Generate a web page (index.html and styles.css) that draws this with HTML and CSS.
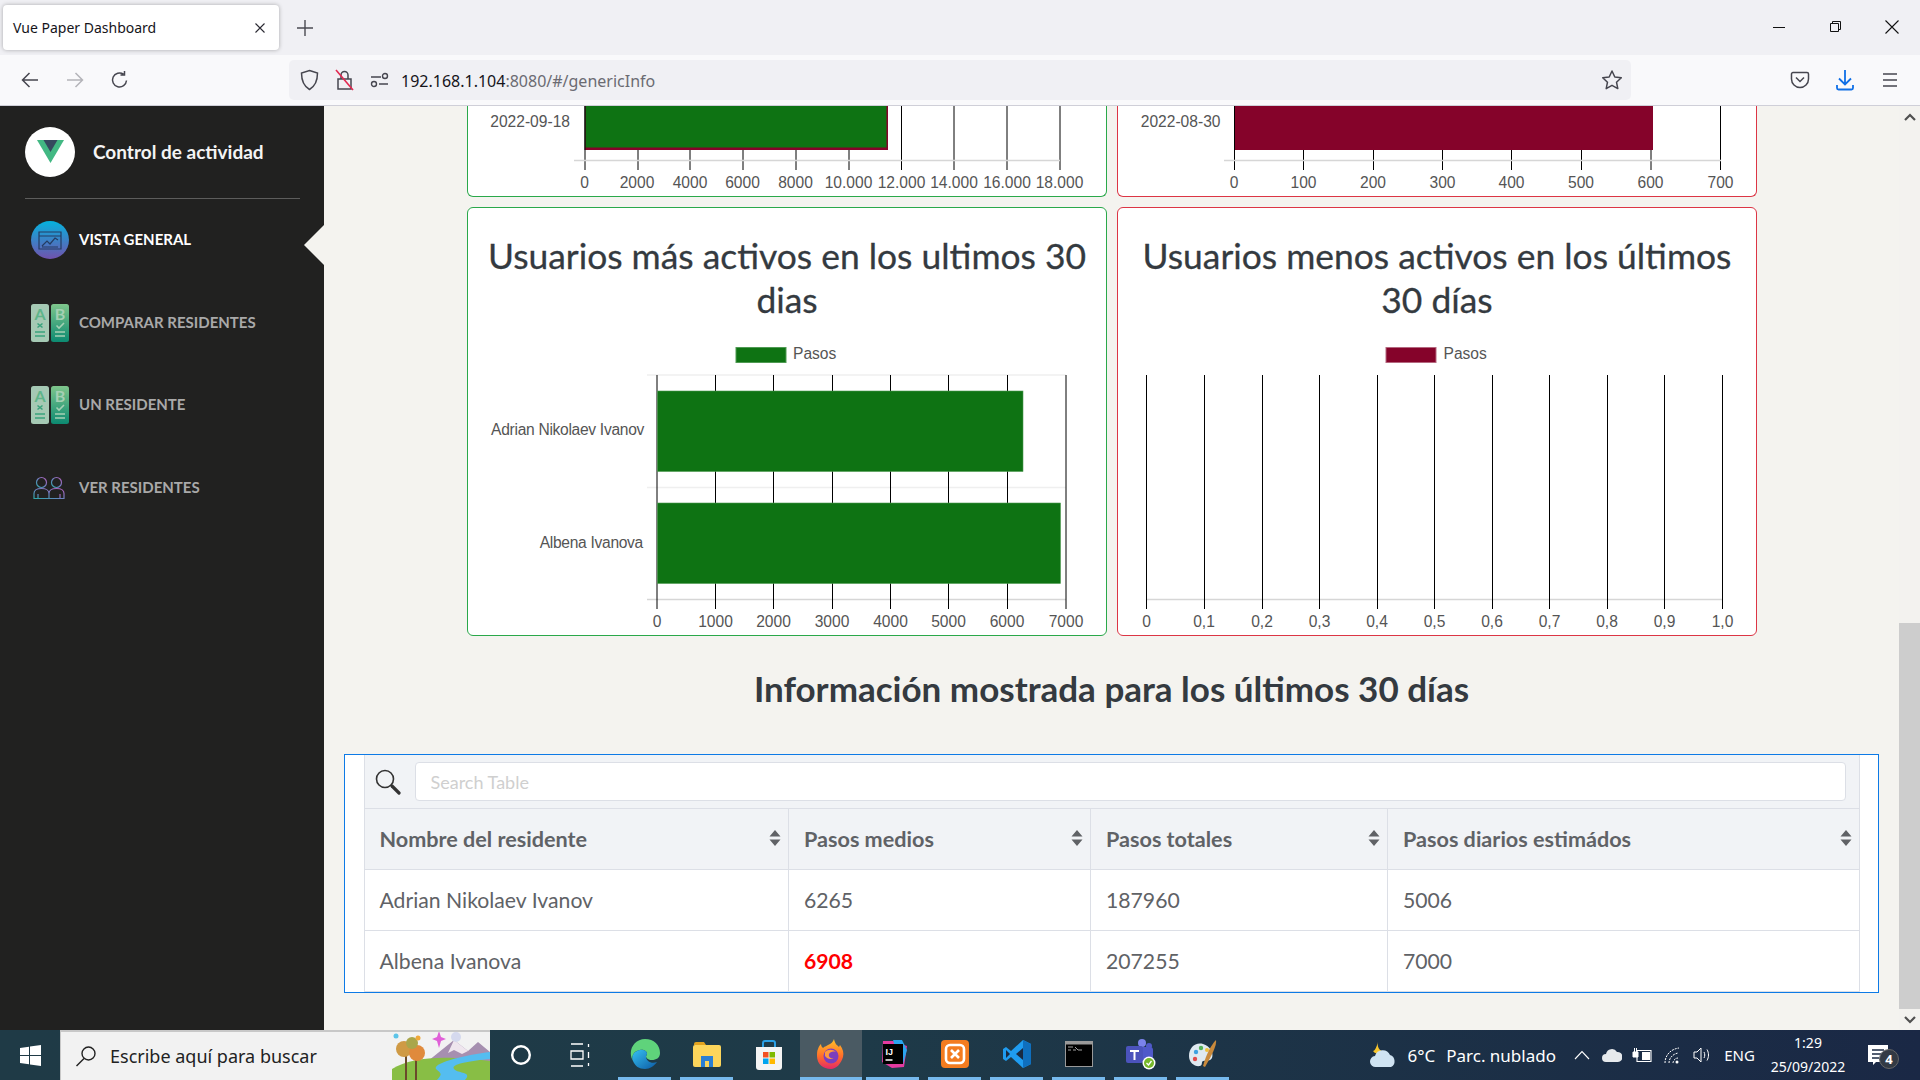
FILE: index.html
```html
<!DOCTYPE html>
<html lang="es">
<head>
<meta charset="UTF-8">
<title>Vue Paper Dashboard</title>
<link rel="stylesheet" href="styles.css">
</head>
<body>

<!-- browser chrome -->
<div class="tabstrip">
	<div class="tab">
		<span class="tab-title">Vue Paper Dashboard</span>
		<svg class="tab-close" width="12" height="12" viewBox="0 0 12 12"><path d="M1.5 1.5l9 9M10.5 1.5l-9 9" stroke="#2b2a33" stroke-width="1.1"/></svg>
	</div>
	<svg class="new-tab" width="16" height="16" viewBox="0 0 16 16"><path d="M8 0v16M0 8h16" stroke="#4a4a52" stroke-width="1.4"/></svg>
	<div class="winctrls">
		<svg width="46" height="16" viewBox="0 0 46 16"><path d="M17 8.5h12" stroke="#111" stroke-width="1"/></svg>
		<svg width="46" height="16" viewBox="0 0 46 16"><path d="M18.5 4.5h8v8h-8zM20.5 4.5v-2h8v8h-2" fill="none" stroke="#111" stroke-width="1"/></svg>
		<svg width="46" height="16" viewBox="0 0 46 16"><path d="M16.500 1.500l13 13M29.500 1.500l-13 13" stroke="#111" stroke-width="1.1"/></svg>
	</div>
</div>

<div class="toolbar">
	<span class="tool-btn"><svg width="20" height="20" viewBox="0 0 20 20"><path d="M18 10H3M9.500 3L2.500 10l7 7" fill="none" stroke="#46464f" stroke-width="1.5"/></svg></span>
	<span class="tool-btn"><svg width="20" height="20" viewBox="0 0 20 20"><path d="M2 10h15M10.500 3l7 7-7 7" fill="none" stroke="#b4b4b9" stroke-width="1.5"/></svg></span>
	<span class="tool-btn"><svg width="20" height="20" viewBox="0 0 20 20"><path d="M16.500 10.500a7 7 0 1 1-3-6.300M14.500 1v4h-4" fill="none" stroke="#46464f" stroke-width="1.5"/></svg></span>
	<div class="urlbar">
		<span class="url-icon"><svg width="19" height="22" viewBox="0 0 19 22"><path d="M9.500 1.500l8 2.500c0 8-2 13-8 16.500C3.500 17 1.500 12 1.500 4z" fill="none" stroke="#46464f" stroke-width="1.5"/></svg></span>
		<span class="url-icon"><svg width="19" height="22" viewBox="0 0 19 22"><path d="M3 10h13v10H3zM6 10V6a3.500 3.500 0 0 1 7 0v4" fill="none" stroke="#46464f" stroke-width="1.5"/><path d="M1 1l17 20" stroke="#e22850" stroke-width="1.6"/></svg></span>
		<span class="url-icon"><svg width="19" height="16" viewBox="0 0 19 16"><path d="M1 5h10M9 12h9" stroke="#46464f" stroke-width="1.5"/><circle cx="15" cy="4" r="2.500" fill="none" stroke="#46464f" stroke-width="1.400"/><circle cx="4" cy="12" r="2.500" fill="none" stroke="#46464f" stroke-width="1.400"/></svg></span>
		<span class="url-text">192.168.1.104<span class="url-dim">:8080/#/genericInfo</span></span>
		<svg class="url-star" width="22" height="22" viewBox="0 0 22 22"><path d="M11 2l2.800 6 6.500.8-4.800 4.400 1.300 6.400-5.800-3.300-5.800 3.300 1.300-6.400L1.700 8.800 8.200 8z" fill="none" stroke="#46464f" stroke-width="1.500" stroke-linejoin="round"/></svg>
	</div>
	<div class="tool-right">
		<span class="tool-btn"><svg width="20" height="20" viewBox="0 0 20 20"><path d="M3 2.500h14a1.500 1.500 0 0 1 1.500 1.500v5a8.500 8.500 0 0 1-17 0V4A1.500 1.500 0 0 1 3 2.500z" fill="none" stroke="#46464f" stroke-width="1.500"/><path d="M6 7.500l4 4 4-4" fill="none" stroke="#46464f" stroke-width="1.500"/></svg></span>
		<span class="tool-btn"><svg width="20" height="22" viewBox="0 0 20 22"><path d="M10 1v14M4 9.500l6 6 6-6" fill="none" stroke="#0f6fe6" stroke-width="1.800"/><path d="M2 16v3a1.500 1.500 0 0 0 1.500 1.500h13A1.500 1.500 0 0 0 18 19v-3" fill="none" stroke="#0f6fe6" stroke-width="1.800"/></svg></span>
		<span class="tool-btn"><svg width="18" height="16" viewBox="0 0 18 16"><path d="M2 2h14M2 8h14M2 14h14" stroke="#46464f" stroke-width="1.600"/></svg></span>
	</div>
</div>

<div class="app">
	<aside class="sidebar">
		<div class="brand">
			<span class="brand-logo"><svg width="27" height="23" viewBox="0 0 27 23"><path d="M0 0h27L13.500 23z" fill="#42b883"/><path d="M6.500 0h14l-7 12z" fill="#35495e"/></svg></span>
			<span class="brand-name">Control de actividad</span>
		</div>
		<nav class="nav">
			<a class="nav-item active">
				<svg class="nav-icon" width="38" height="38" viewBox="0 0 38 38">
					<defs><linearGradient id="g1" x1="0" y1="0" x2="0" y2="1"><stop offset="0" stop-color="#05b2de"/><stop offset="1" stop-color="#7152ae"/></linearGradient></defs>
					<circle cx="19" cy="19" r="19" fill="url(#g1)"/>
					<path d="M8 11h22v17H8zM8 15h22" fill="none" stroke="#253c62" stroke-width="1.200"/>
					<path d="M11 25l5-5 3 3 5-6 3 2M11 26h16" fill="none" stroke="#253c62" stroke-width="1.200"/>
				</svg>
				<span>VISTA GENERAL</span>
			</a>
			<a class="nav-item">
				<svg class="nav-icon" width="38" height="38" viewBox="0 0 38 38">
					<defs><linearGradient id="g2" x1="0" y1="0" x2="0" y2="1"><stop offset="0" stop-color="#7fc68c"/><stop offset="1" stop-color="#0c8a71"/></linearGradient></defs>
					<rect width="18" height="38" rx="2.500" fill="#a5c9b4"/>
					<rect x="20" width="18" height="38" rx="2.500" fill="url(#g2)"/>
					<text class="ab-letter" x="9" y="16" fill="#5fb58a">A</text>
					<text class="ab-letter" x="29" y="16" fill="#a5d0b4">B</text>
					<path d="M6.500 19.500l5 4M11.500 19.500l-5 4" stroke="#3aa27c" stroke-width="1.600"/>
					<path d="M25.500 21.500l2.500 2.500 5-5" fill="none" stroke="#a5d0b4" stroke-width="1.600"/>
					<path d="M4 28h10M4 32h10" stroke="#3aa27c" stroke-width="1.600"/>
					<path d="M24 28h10M24 32h10" stroke="#a5d0b4" stroke-width="1.600"/>
				</svg>
				<span>COMPARAR RESIDENTES</span>
			</a>
			<a class="nav-item">
				<svg class="nav-icon" width="38" height="38" viewBox="0 0 38 38">
					<rect width="18" height="38" rx="2.500" fill="#a5c9b4"/>
					<rect x="20" width="18" height="38" rx="2.500" fill="url(#g2)"/>
					<text class="ab-letter" x="9" y="16" fill="#5fb58a">A</text>
					<text class="ab-letter" x="29" y="16" fill="#a5d0b4">B</text>
					<path d="M6.500 19.500l5 4M11.500 19.500l-5 4" stroke="#3aa27c" stroke-width="1.600"/>
					<path d="M25.500 21.500l2.500 2.500 5-5" fill="none" stroke="#a5d0b4" stroke-width="1.600"/>
					<path d="M4 28h10M4 32h10" stroke="#3aa27c" stroke-width="1.600"/>
					<path d="M24 28h10M24 32h10" stroke="#a5d0b4" stroke-width="1.600"/>
				</svg>
				<span>UN RESIDENTE</span>
			</a>
			<a class="nav-item">
				<svg class="nav-icon" width="38" height="24" viewBox="0 0 38 24">
					<defs><linearGradient id="g3" x1="0" y1="1" x2="1" y2="0"><stop offset="0" stop-color="#2fa7a8"/><stop offset=".5" stop-color="#6f7fc0"/><stop offset="1" stop-color="#b35bb5"/></linearGradient></defs>
					<g fill="none" stroke="url(#g3)" stroke-width="1.200">
						<circle cx="11.500" cy="6.500" r="5"/><circle cx="26.500" cy="6.500" r="5"/>
						<path d="M4 22.500v-5c0-3 3-5 7.500-5s7.500 2 7.500 5c0-3 3-5 7.500-5s7.500 2 7.500 5v5zM19 17.500v5"/>
						<path d="M8 18v4.500M30 18v4.500"/>
					</g>
				</svg>
				<span>VER RESIDENTES</span>
			</a>
		</nav>
	</aside>

	<main class="content">
		<div class="charts">
			<section class="card card-green card-cut">
				<svg class="chart" width="638" height="90" viewBox="468 106 638 90">
					<g class="grid-v">
						<path d="M585 106v64M638 150v20M690 150v20M743 150v20M796 150v20M849 150v20M901.500 106v64M954 106v64M1007 106v64M1060 106v64"/>
					</g>
					<path class="grid-h" d="M574 160.500h486"/>
					<rect x="585" y="106" width="303" height="44" fill="#85032a"/>
					<rect x="585.500" y="106" width="301" height="41.500" fill="#0e7313"/>
					<path class="grid-v" d="M585 106v44"/>
					<text class="tick tick-end" x="570" y="127">2022-09-18</text>
					<g class="tick">
						<text x="584.500" y="188">0</text><text x="637" y="188">2000</text><text x="690" y="188">4000</text><text x="742.500" y="188">6000</text><text x="795.500" y="188">8000</text><text x="848.500" y="188">10.000</text><text x="901.500" y="188">12.000</text><text x="954" y="188">14.000</text><text x="1007" y="188">16.000</text><text x="1059.500" y="188">18.000</text>
					</g>
				</svg>
			</section>
			<section class="card card-red card-cut">
				<svg class="chart" width="638" height="90" viewBox="1118 106 638 90">
					<path class="grid-v" d="M1234.500 106v64M1303.500 150v20M1373.500 150v20M1442.500 150v20M1511.500 150v20M1581.500 150v20M1651 150v20M1720.500 106v64"/>
					<path class="grid-h" d="M1224 160.500h497"/>
					<rect x="1235" y="106" width="418" height="44" fill="#85032a"/>
					<text class="tick tick-end" x="1220.500" y="127">2022-08-30</text>
					<g class="tick">
						<text x="1234" y="188">0</text><text x="1303.500" y="188">100</text><text x="1373" y="188">200</text><text x="1442.500" y="188">300</text><text x="1511.500" y="188">400</text><text x="1581" y="188">500</text><text x="1650.500" y="188">600</text><text x="1720.500" y="188">700</text>
					</g>
				</svg>
			</section>
			<section class="card card-green">
				<h4 class="card-title">Usuarios más activos en los ultimos 30 dias</h4>
				<svg class="chart" width="638" height="312" viewBox="468 323 638 312">
					<rect x="736" y="347.500" width="50" height="15" fill="#0e7313" stroke="#4f9a53"/>
					<text class="tick tick-start" x="793" y="359">Pasos</text>
					<path class="grid-h light" d="M647 375h419M647 487.500h419"/>
					<path class="grid-h" d="M647 599.500h419"/>
					<path class="grid-v" d="M657 375v234M715.500 375v234M773.500 375v234M832.500 375v234M890.500 375v234M948.500 375v234M1007.500 375v234M1066 375v234"/>
					<rect x="657.500" y="391" width="365.500" height="80.500" fill="#0e7313" stroke="#4f9a53" stroke-width=".6"/>
					<rect x="657.500" y="503" width="403" height="80.500" fill="#0e7313" stroke="#4f9a53" stroke-width=".6"/>
					<text class="tick tick-end tick-name" x="644" y="435">Adrian Nikolaev Ivanov</text>
					<text class="tick tick-end tick-name" x="643" y="548">Albena Ivanova</text>
					<g class="tick">
						<text x="657" y="627">0</text><text x="715.500" y="627">1000</text><text x="773.500" y="627">2000</text><text x="832" y="627">3000</text><text x="890.500" y="627">4000</text><text x="948.500" y="627">5000</text><text x="1007" y="627">6000</text><text x="1066" y="627">7000</text>
					</g>
				</svg>
			</section>
			<section class="card card-red">
				<h4 class="card-title">Usuarios menos activos en los últimos 30 días</h4>
				<svg class="chart" width="638" height="312" viewBox="1118 323 638 312">
					<rect x="1386" y="347.500" width="50" height="15" fill="#85032a" stroke="#b4687f"/>
					<text class="tick tick-start" x="1443.500" y="359">Pasos</text>
					<path class="grid-h" d="M1146 599.500h577"/>
					<path class="grid-v" d="M1146.500 375v234M1204.500 375v234M1262.500 375v234M1319.500 375v234M1377.500 375v234M1434.500 375v234M1492.500 375v234M1549.500 375v234M1607.500 375v234M1664.500 375v234M1722.500 375v234"/>
					<g class="tick">
						<text x="1146.500" y="627">0</text><text x="1204" y="627">0,1</text><text x="1262" y="627">0,2</text><text x="1319.500" y="627">0,3</text><text x="1377" y="627">0,4</text><text x="1434.500" y="627">0,5</text><text x="1492" y="627">0,6</text><text x="1549.500" y="627">0,7</text><text x="1607" y="627">0,8</text><text x="1664.500" y="627">0,9</text><text x="1722.500" y="627">1,0</text>
					</g>
				</svg>
			</section>
		</div>

		<h3 class="section-title">Información mostrada para los últimos 30 días</h3>

		<div class="table-wrap">
			<div class="search-row">
				<svg class="search-icon" width="28" height="26" viewBox="0 0 28 26"><circle cx="11" cy="10" r="8.500" fill="none" stroke="#333" stroke-width="1.600"/><path d="M18 17l7 7" stroke="#333" stroke-width="3.200" stroke-linecap="round"/></svg>
				<input class="search-input" type="text" placeholder="Search Table">
			</div>
			<table class="res-table">
				<colgroup><col class="col-a"><col class="col-b"><col class="col-c"><col></colgroup>
				<thead>
					<tr>
						<th><div class="th-in">Nombre del residente<svg width="12" height="16" viewBox="0 0 12 16"><path d="M6 0l5.500 6.500H.5zM6 16L.5 9.500h11z" fill="#606266"/></svg></div></th>
						<th><div class="th-in">Pasos medios<svg width="12" height="16" viewBox="0 0 12 16"><path d="M6 0l5.500 6.500H.5zM6 16L.5 9.500h11z" fill="#606266"/></svg></div></th>
						<th><div class="th-in">Pasos totales<svg width="12" height="16" viewBox="0 0 12 16"><path d="M6 0l5.500 6.500H.5zM6 16L.5 9.500h11z" fill="#606266"/></svg></div></th>
						<th><div class="th-in">Pasos diarios estimádos<svg width="12" height="16" viewBox="0 0 12 16"><path d="M6 0l5.500 6.500H.5zM6 16L.5 9.500h11z" fill="#606266"/></svg></div></th>
					</tr>
				</thead>
				<tbody>
					<tr><td>Adrian Nikolaev Ivanov</td><td>6265</td><td>187960</td><td>5006</td></tr>
					<tr><td>Albena Ivanova</td><td class="hot">6908</td><td>207255</td><td>7000</td></tr>
				</tbody>
			</table>
		</div>
	</main>

	<div class="scrollbar">
		<span class="scroll-btn"><svg width="12" height="8" viewBox="0 0 12 8"><path d="M1 7l5-5 5 5" fill="none" stroke="#505050" stroke-width="2.200"/></svg></span>
		<span class="scroll-track"></span>
		<span class="scroll-thumb"></span>
		<span class="scroll-btn"><svg width="12" height="8" viewBox="0 0 12 8"><path d="M1 1l5 5 5-5" fill="none" stroke="#505050" stroke-width="2.200"/></svg></span>
	</div>
</div>

<!-- windows taskbar -->
<footer class="taskbar">
	<span class="start"><svg width="21" height="21" viewBox="0 0 21 21"><path d="M0 3l9-1.300V10H0zM10 1.500L21 0v10H10zM0 11h9v8.300L0 18zM10 11h11v10l-11-1.500z" fill="#fff"/></svg></span>
	<div class="task-search">
		<svg width="22" height="22" viewBox="0 0 22 22"><circle cx="13.500" cy="8.500" r="6.500" fill="none" stroke="#222" stroke-width="1.400"/><path d="M9 13.500L1.500 21" stroke="#222" stroke-width="1.500"/></svg>
		<span class="task-search-text">Escribe aquí para buscar</span>
		<svg class="scenery" width="98" height="50" viewBox="0 0 98 50">
			<path d="M36 30L62 9l14 11 10-9 12 10v29H30z" fill="#a68fb0"/>
			<path d="M62 9l14 11-6 3-8-4-6 3z" fill="#efe6ee"/>
			<path d="M0 50V38c20-12 50-14 98-8v20z" fill="#88be45"/>
			<path d="M98 28c-20 2-40 5-36 10s20 2 10 12H44c8-8 4-8 0-12-4-6 30-14 54-17z" fill="#54bdf0"/>
			<path d="M14 50V24M24 50V28" stroke="#6b4a2b" stroke-width="2"/>
			<circle cx="12" cy="18" r="8" fill="#cf9a45"/><circle cx="25" cy="22" r="8" fill="#e08a3c"/><circle cx="20" cy="12" r="6" fill="#a9a64b"/>
			<circle cx="4" cy="5" r="2.500" fill="#5cc4e8"/><circle cx="26" cy="7" r="2.500" fill="#f0a93a"/>
			<path d="M47 0l2 6 5 2-5 2-2 7-2-7-5-2 5-2z" fill="#e05fd8"/>
			<circle cx="64" cy="6" r="5" fill="#d5d9ee"/>
		</svg>
	</div>
	<div class="task-apps">
		<span class="task-slot"><svg width="22" height="22" viewBox="0 0 22 22"><circle cx="11" cy="11" r="8.800" fill="none" stroke="#fff" stroke-width="2.400"/></svg></span>
		<span class="task-slot"><svg class="taskview" width="20" height="24" viewBox="0 0 20 24"><path d="M1 1h12M1 23h12M1 8h12v8H1zM18.500 1v3M18.500 9v6M18.500 20v3" fill="none" stroke="#fff" stroke-width="1.300"/></svg></span>
		<span class="task-slot open"><svg width="30" height="30" viewBox="0 0 30 30"><defs><linearGradient id="e1" x1="0" y1="0" x2="1" y2="1"><stop offset="0" stop-color="#35c1f1"/><stop offset="1" stop-color="#0c59a4"/></linearGradient></defs><path d="M15 0c9 0 15 6 15 14 0 5-4 7-8 7-4 0-6-2-6-4 3-3-1-7-6-6C4 12 1 17 3 22 -3 12 4 0 15 0z" fill="#5fd37b"/><path d="M3 22C1 17 4 12 10 11c5-1 9 3 6 6 0 6 6 8 11 6-3 4-7 7-12 7C9 30 5 27 3 22z" fill="url(#e1)"/></svg></span>
		<span class="task-slot open"><svg width="28" height="26" viewBox="0 0 28 26"><path d="M1 3a2 2 0 0 1 2-2h8l2 3H1z" fill="#e2a21e"/><rect y="4" width="28" height="22" rx="2" fill="#fcd55b"/><path d="M8 26V15h12v11h-4v-6h-4v6z" fill="#2a7fd4"/></svg></span>
		<span class="task-slot"><svg width="28" height="30" viewBox="0 0 28 30"><path d="M8 7V3a2 2 0 0 1 2-2h8a2 2 0 0 1 2 2v4" fill="none" stroke="#2aa0e6" stroke-width="2"/><path d="M1 7h26v20a3 3 0 0 1-3 3H4a3 3 0 0 1-3-3z" fill="#f4f4f4"/><rect x="8" y="12" width="5.500" height="5.500" fill="#f25022"/><rect x="14.500" y="12" width="5.500" height="5.500" fill="#7fba00"/><rect x="8" y="18.500" width="5.500" height="5.500" fill="#00a4ef"/><rect x="14.500" y="18.500" width="5.500" height="5.500" fill="#ffb900"/></svg></span>
		<span class="task-slot active"><svg width="30" height="30" viewBox="0 0 30 30"><defs><linearGradient id="f1" x1="0" y1="0" x2="0" y2="1"><stop offset="0" stop-color="#ffc22a"/><stop offset=".6" stop-color="#ff6a2a"/><stop offset="1" stop-color="#e3286a"/></linearGradient></defs><path d="M2 10C3 7 4 6 5 5c0 2 1 3 2 4 2-2 4-2 5-3 3-1 5-3 6-6 1 5 3 6 5 8l1-2c3 4 4 8 3 12-2 7-7 12-12 12C7 30 1 25 1 17c0-3 0-5 1-7z" fill="url(#f1)"/><circle cx="15" cy="17" r="7.500" fill="#7b3fbd"/><path d="M9 13c3-3 8-3 11 0-3-1-6 0-7 2-1 3 2 5 5 4-3 2-7 1-9-2z" fill="#ff9a3c"/></svg></span>
		<span class="task-slot open"><svg width="28" height="28" viewBox="0 0 28 28"><path d="M4 1h10L28 6l-3 21-12 1L3 22z" fill="#e43aa0"/><path d="M14 0h9l5 10-4 14-6-10z" fill="#2aa5f0"/><rect x="4" y="4" width="20" height="20" fill="#000"/><text class="ij" x="6.500" y="14.500">IJ</text><path d="M6.500 20h7" stroke="#fff" stroke-width="1.500"/></svg></span>
		<span class="task-slot open"><svg width="28" height="28" viewBox="0 0 28 28"><rect width="28" height="28" rx="4" fill="#f37c20"/><path d="M9 5h10a4 4 0 0 1 4 4v10a4 4 0 0 1-4 4H9a4 4 0 0 1-4-4V9a4 4 0 0 1 4-4z" fill="none" stroke="#fff" stroke-width="2.600"/><path d="M10 10l8 8M18 10l-8 8" stroke="#fff" stroke-width="2.600"/></svg></span>
		<span class="task-slot open"><svg width="30" height="30" viewBox="0 0 30 30"><path d="M21 1l8 4v20l-8 4-12-11-5 4-3-2v-10l3-2 5 4z" fill="#1f9cf0"/><path d="M21 1l8 4v20l-8 4z" fill="#0f6fbe"/><path d="M21 9l-7 6 7 6z" fill="#1a2a42"/><path d="M4 11l4 4-4 4z" fill="#1a2a42"/></svg></span>
		<span class="task-slot open"><svg width="28" height="26" viewBox="0 0 28 26"><rect width="28" height="26" fill="#999"/><rect x="1" y="3.500" width="26" height="21.500" fill="#000"/><path d="M3 6h5M3 9h3M8 9l3 0M10 6l3 3h4" stroke="#ccc" stroke-width=".8" fill="none"/></svg></span>
		<span class="task-slot open"><svg width="32" height="32" viewBox="0 0 32 32"><circle cx="17" cy="5" r="4" fill="#7b83eb"/><circle cx="24" cy="8" r="3" fill="#5059c9"/><rect x="13" y="9" width="15" height="15" rx="3" fill="#5059c9"/><rect x="1" y="8" width="17" height="17" rx="2" fill="#4b53bc"/><path d="M5 12h9v2h-3.500v8h-2v-8H5z" fill="#fff"/><circle cx="24" cy="25" r="6.500" fill="#fff"/><circle cx="24" cy="25" r="5" fill="#76b82a"/><path d="M21.500 25l2 2 3-4" fill="none" stroke="#fff" stroke-width="1.300"/></svg></span>
		<span class="task-slot open"><svg width="30" height="30" viewBox="0 0 30 30"><path d="M15 5C7 3 1 9 1 17c0 7 6 11 11 10 3-1 1-4 3-5 3-1 7 1 9-3 2-5-2-12-9-14z" fill="#dfe9f0"/><circle cx="8" cy="13" r="2.200" fill="#3fa1e0"/><circle cx="13" cy="9" r="2.200" fill="#54b257"/><circle cx="7" cy="20" r="2.200" fill="#e14b4b"/><circle cx="19" cy="11" r="2" fill="#f0c03a"/><path d="M28 1c1 5-4 15-11 27l-2-1C18 16 23 6 28 1z" fill="#c98a3c"/></svg></span>
	</div>
	<div class="tray">
		<svg class="tray-weather" width="28" height="26" viewBox="0 0 28 26"><path d="M9 0c-1 5 1 9 7 10-3 3-9 3-12-1 2 0 4-5 5-9z" fill="#f7c52d"/><path d="M7 25a5.500 5.500 0 0 1-1-11 8 8 0 0 1 15-1 6.500 6.500 0 0 1 1 12z" fill="#cfe3f2"/></svg>
		<span class="tray-temp">6°C</span>
		<span class="tray-temp">Parc. nublado</span>
		<span class="tray-slot"><svg width="16" height="10" viewBox="0 0 16 10"><path d="M1 9l7-7.500L15 9" fill="none" stroke="#fff" stroke-width="1.100"/></svg></span>
		<span class="tray-slot"><svg width="20" height="14" viewBox="0 0 20 14"><path d="M4 14a4 4 0 0 1 0-8 6 6 0 0 1 11-2 5 5 0 0 1 1 10z" fill="#e6e9ec"/></svg></span>
		<span class="tray-slot"><svg width="20" height="16" viewBox="0 0 20 16"><path d="M5 3.500h14v11H5z" fill="none" stroke="#fff" stroke-width="1.100"/><rect x="10" y="5" width="8" height="8" fill="#fff"/><path d="M1 5h5v5H1zM2.500 1v4M4.500 1v4" stroke="#fff" fill="#fff"/></svg></span>
		<span class="tray-slot"><svg width="18" height="18" viewBox="0 0 18 18"><path d="M2 17C2 9 8 3 16 2M6 17c0-5 4-9 9-10M10 17c0-2 2-5 5-5" fill="none" stroke="#fff" stroke-width="1" stroke-dasharray="2 1"/><circle cx="14" cy="16" r="1.500" fill="#fff"/></svg></span>
		<span class="tray-slot"><svg width="20" height="20" viewBox="0 0 20 20"><path d="M2 7h3l4-4v14l-4-4H2z" fill="none" stroke="#fff" stroke-width="1"/><path d="M12 7c1 2 1 4 0 6M15 4.500c2 3.500 2 7.500 0 11" fill="none" stroke="#fff" stroke-width="1"/></svg></span>
		<span class="tray-lang">ENG</span>
		<span class="tray-clock"><span>1:29</span><span>25/09/2022</span></span>
		<span class="tray-notif">
			<svg width="20" height="20" viewBox="0 0 20 20"><path d="M0 0h20v17H8l-3 3v-3H0z" fill="#fff"/><path d="M4 5h12M4 9h12M4 13h7" stroke="#1b2a42" stroke-width="1.300"/></svg>
			<span class="notif-badge">4</span>
		</span>
	</div>
</footer>

</body>
</html>
```

FILE: styles.css
```css
html, body{
	margin:0;
	height:100%;
}

body{
	width:1920px;
	height:1080px;
	display:flex;
	flex-direction:column;
	overflow:hidden;
	background:#f4f3ef;
	font-family:"Lato", "Liberation Sans", sans-serif;
}

svg{
	display:block;
}

/* browser chrome */
.tabstrip{
	height:55px;
	flex:none;
	display:flex;
	align-items:flex-start;
	background:#f0f0f4;
}

.tab{
	width:276px;
	height:45px;
	margin:5px 0 0 3px;
	padding:0 13px 0 10px;
	box-sizing:border-box;
	display:flex;
	align-items:center;
	justify-content:space-between;
	background:#fff;
	border-radius:4px;
	box-shadow:0 0 4px rgba(0,0,0,.3);
}

.tab-title{
	font:14px "Noto Sans", sans-serif;
	color:#15141a;
}

.new-tab{
	margin:20px 0 0 18px;
}

.winctrls{
	margin-left:auto;
	display:flex;
	padding:19px 5px 0 0;
}

.winctrls svg{
	margin-left:10.7px;
}

.toolbar{
	height:51px;
	flex:none;
	box-sizing:border-box;
	display:flex;
	align-items:center;
	padding-left:7.5px;
	background:#f9f9fb;
	border-bottom:1px solid #cfcfd8;
}

.tool-btn{
	width:45px;
	display:flex;
	align-items:center;
	justify-content:center;
}

.urlbar{
	width:1342px;
	height:40px;
	margin-left:146.5px;
	padding:0 8px 0 2.5px;
	box-sizing:border-box;
	display:flex;
	align-items:center;
	background:#f0f0f4;
	border-radius:5px;
}

.url-icon{
	width:35px;
	display:flex;
	justify-content:center;
}

.url-text{
	margin:2px 0 0 4.5px;
	font:16px "Noto Sans", sans-serif;
	color:#15141a;
}

.url-dim{
	color:#6b6b72;
}

.url-star{
	margin-left:auto;
}

.tool-right{
	margin-left:auto;
	padding-right:7.5px;
	display:flex;
}

.app{
	flex:1;
	display:flex;
	min-height:0;
}

/* sidebar */
.sidebar{
	width:324px;
	flex:none;
	background:#212120;
}

.brand{
	height:93px;
	margin:0 24px 0 25px;
	box-sizing:border-box;
	display:flex;
	align-items:center;
	padding-bottom:1px;
	border-bottom:1px solid #5d5d5c;
}

.brand-logo{
	width:50px;
	height:50px;
	border-radius:50%;
	background:#fff;
	display:flex;
	align-items:center;
	justify-content:center;
}

.brand-name{
	margin-left:18px;
	font-size:19px;
	font-weight:700;
	color:#f4f4f4;
}

.nav-item{
	position:relative;
	height:82.5px;
	padding-left:31px;
	display:flex;
	align-items:center;
	font-size:15px;
	font-weight:700;
	color:#a9a9a9;
}

.nav-item span{
	position:absolute;
	left:79px;
	margin-top:-2px;
}

.nav-item:last-child{
	padding-left:30px;
}

.nav-item.active{
	color:#fff;
}

.nav-item.active::after{
	content:"";
	position:absolute;
	right:0;
	top:26px;
	border-style:solid;
	border-width:20px 20px 20px 0;
	border-color:transparent #f4f3ef transparent transparent;
}

.ab-letter{
	font:700 16px "Lato", sans-serif;
	text-anchor:middle;
}

.ij{
	font:700 9px "Liberation Sans", sans-serif;
	fill:#fff;
}

/* content */
.content{
	flex:1;
	min-width:0;
}

.charts{
	display:grid;
	grid-template-columns:1fr 1fr;
	grid-template-rows:91px 429px;
	gap:10px;
	padding:0 142px 0 143px;
}

.card{
	background:#fff;
	border:1px solid;
	border-radius:6px;
	overflow:hidden;
}

.card-green{
	border-color:#2aa84a;
}

.card-red{
	border-color:#dc3545;
}

.card-cut{
	border-top:none;
	border-radius:0 0 6px 6px;
}

.card-title{
	margin:0;
	padding:26px 15px 1px;
	font-size:35.4px;
	line-height:44px;
	font-weight:400;
	-webkit-text-stroke:.3px #343a40;
	text-align:center;
	color:#343a40;
}

.chart{
	display:block;
}

.grid-v, .grid-v path{
	stroke:#000;
	stroke-width:1;
	fill:none;
}

.grid-h{
	stroke:#d6d6d6;
	stroke-width:1.5;
	fill:none;
}

.grid-h.light{
	stroke:#efefef;
}

.tick{
	font:15.6px "Liberation Sans", sans-serif;
	fill:#555;
	text-anchor:middle;
}

.tick-end{
	text-anchor:end;
}

.tick-start{
	text-anchor:start;
}

.tick-name{
	letter-spacing:-.3px;
}

.section-title{
	margin:30px 0 44px;
	font-size:35px;
	line-height:44px;
	font-weight:700;
	text-align:center;
	color:#343a40;
}

/* table */
.table-wrap{
	margin:0 20px;
	padding:0 18.5px;
	background:#fff;
	border:1px solid #0d7ae6;
}

.search-row{
	height:53px;
	box-sizing:border-box;
	display:flex;
	align-items:center;
	padding:0 13px 0 9px;
	background:#f1f3f6;
	border:1px solid #dcdfe6;
	border-width:0 1px;
}

.search-input{
	flex:1;
	height:39px;
	margin-left:13px;
	padding:0 15px;
	box-sizing:border-box;
	font:18px "Lato", sans-serif;
	border:1px solid #dcdfe6;
	border-radius:4px;
	outline:none;
}

.search-input::placeholder{
	color:#cfcfcf;
}

.res-table{
	width:100%;
	table-layout:fixed;
	border-collapse:collapse;
	font-size:21.2px;
	color:#606266;
}

.col-a{
	width:424.5px;
}

.col-b{
	width:302px;
}

.col-c{
	width:297px;
}

.res-table th, .res-table td{
	height:61px;
	padding:0 15px;
	box-sizing:border-box;
	border:1px solid #dcdfe6;
	text-align:left;
}

.res-table th{
	padding-right:7px;
	font-size:21.6px;
	font-weight:700;
	background:#f1f3f6;
}

.th-in{
	display:flex;
	align-items:center;
	justify-content:space-between;
}

.th-in svg{
	margin-top:-3px;
}

.res-table td.hot{
	color:#f00;
	font-weight:700;
}

/* page scrollbar */
.scrollbar{
	width:21px;
	flex:none;
	display:flex;
	flex-direction:column;
	background:#f3f2ef;
}

.scroll-btn{
	height:21px;
	flex:none;
	display:flex;
	align-items:center;
	justify-content:center;
}

.scroll-track{
	flex:1;
}

.scroll-thumb{
	height:386px;
	flex:none;
	background:#cdcdcd;
}

/* taskbar */
.taskbar{
	height:50px;
	flex:none;
	display:flex;
	align-items:center;
	background:linear-gradient(90deg, #1f3a46 0%, #1e3a48 45%, #1a2845 100%);
	color:#fff;
	font-family:"Noto Sans", sans-serif;
}

.start{
	width:60px;
	display:flex;
	justify-content:center;
}

.task-search{
	width:430px;
	height:50px;
	flex:none;
	box-sizing:border-box;
	display:flex;
	align-items:center;
	padding-left:14px;
	background:#f2f2f2;
	border-top:2px solid #c8c8c8;
	border-left:1px solid #c8c8c8;
	overflow:hidden;
}

.task-search-text{
	margin-left:13px;
	font-size:18px;
	color:#222;
}

.scenery{
	margin-left:auto;
}

.task-apps{
	display:flex;
	align-self:stretch;
}

.task-slot{
	width:62px;
	box-sizing:border-box;
	display:flex;
	align-items:center;
	justify-content:center;
}

.taskview{
	margin-right:6px;
}

.task-slot.open{
	border-bottom:3px solid;
	border-image:linear-gradient(90deg, transparent 5px, #76b9ed 5px, #76b9ed 56px, transparent 56px) 1;
}

.task-slot.active{
	background:#4a5a63;
	border-bottom:3px solid #76b9ed;
}

.tray{
	margin-left:auto;
	display:flex;
	align-items:center;
}

.tray-weather{
	margin-right:10px;
}

.tray-temp{
	margin-right:11px;
	font-size:17px;
}

.tray-slot{
	width:30px;
	display:flex;
	justify-content:center;
}

.tray-lang{
	width:45px;
	text-align:center;
	font-size:15px;
}

.tray-clock{
	width:92px;
	display:flex;
	flex-direction:column;
	align-items:center;
	gap:6px;
	font-size:14px;
	line-height:18px;
}

.tray-notif{
	position:relative;
	width:66px;
	padding-left:14px;
	box-sizing:border-box;
}

.notif-badge{
	position:absolute;
	left:25px;
	top:4px;
	width:20px;
	height:20px;
	border-radius:50%;
	background:#333a44;
	border:1px solid #666;
	box-sizing:border-box;
	font-size:13px;
	font-weight:700;
	line-height:18px;
	text-align:center;
}
```
